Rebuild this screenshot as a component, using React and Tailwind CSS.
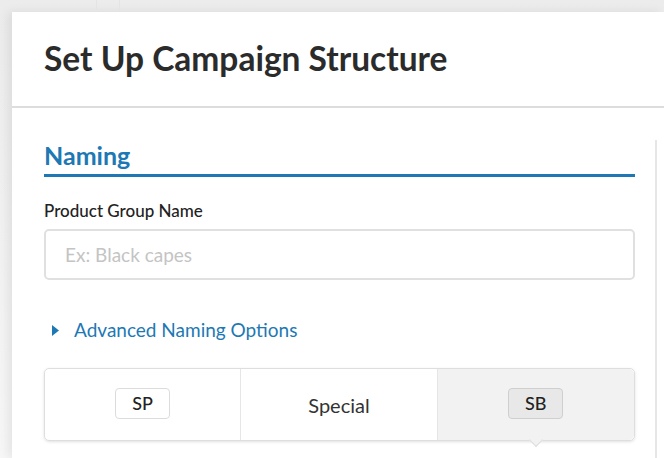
// Campaign structure setup modal (partial view)
const FONT = { fontFamily: "Lato, 'Open Sans', sans-serif" };

function Badge({ label, active }) {
  return (
    <span
      className={`inline-flex h-[31px] w-[55px] items-center justify-center rounded-[4px] border text-[18px] font-medium text-[#222] ${
        active ? "border-[#cfcfcf] bg-[#e8e8e8]" : "border-[#dcdcdc] bg-white"
      }`}
    >
      {label}
    </span>
  );
}

function CampaignTypes() {
  return (
    <div className="relative mt-[26px] grid h-[73px] grid-cols-3 rounded-[5px] border border-[#dedede] shadow-[0_1px_3px_rgba(0,0,0,0.12)]">
      <div className="flex items-center justify-center border-r border-[#e6e6e6] pb-[2px]">
        <Badge label="SP" />
      </div>
      <div className="flex items-center justify-center border-r border-[#e6e6e6] text-[20px] text-[#333]">
        Special
      </div>
      <div className="flex items-center justify-center rounded-r-[5px] bg-[#f2f2f2] pb-[2px]">
        <Badge label="SB" active />
      </div>
      {/* pointer under the selected column */}
      <span className="absolute left-[486px] top-[66px] h-[10px] w-[10px] rotate-45 border-b border-r border-[#dedede] bg-[#f2f2f2]" />
    </div>
  );
}

export default function App() {
  return (
    <div className="h-[458px] w-[664px] overflow-hidden bg-gradient-to-b from-[#ececec] to-[#f7f7f7]" style={FONT}>
      {/* faint columns of the page behind */}
      <div className="flex h-[12px]">
        <div className="w-[97px] border-r border-[#e4e4e4]" />
        <div className="w-[23px] border-r border-[#e4e4e4]" />
      </div>

      <div className="ml-[12px] h-[446px] bg-white shadow-[-4px_0_10px_rgba(0,0,0,0.08)]">
        <div className="flex h-[96px] items-center border-b-2 border-[#dddddd] pl-[32px]">
          <h1 className="pb-[2px] text-[33.5px] font-bold text-[#2b2b2b]">Set Up Campaign Structure</h1>
        </div>

        <div className="flex">
          <div className="w-[623px] pl-[32px] pt-[31px]">
            <h2 className="border-b-[3px] border-[#1d78b4] pb-[3px] text-[25px] font-bold leading-[32px] text-[#1d78b4]">
              Naming
            </h2>

            <label className="mt-[23px] block text-[17px] font-medium leading-[22px] text-[#222]">
              Product Group Name
            </label>
            <input
              className="mt-[7px] h-[51px] w-full rounded-[5px] border-2 border-[#e0e0e0] px-[19px] text-[19px] outline-none placeholder:text-[#c4c4c4]"
              placeholder="Ex: Black capes"
              style={FONT}
            />

            <button className="mt-[38px] flex items-center gap-[15px] pl-[8px] text-[19px] leading-[24px] text-[#1d78b4]">
              <svg width="7" height="11" viewBox="0 0 7 11">
                <path d="M0 0 L7 5.5 L0 11 Z" fill="#1d78b4" />
              </svg>
              Advanced Naming Options
            </button>

            <CampaignTypes />
          </div>
          <div className="ml-[20px] mt-[32px] h-[330px] border-l-2 border-[#e6e6e6]" />
        </div>
      </div>
    </div>
  );
}
